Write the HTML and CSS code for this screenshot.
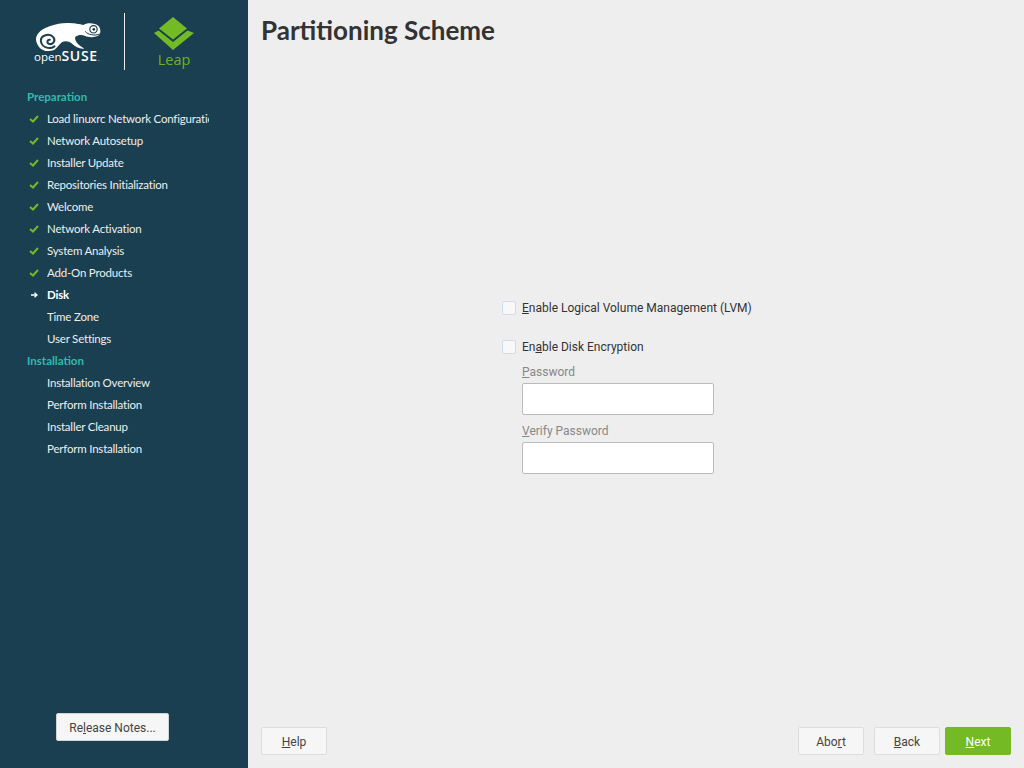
FILE: index.html
```html
<!DOCTYPE html>
<html>
<head>
<meta charset="utf-8">
<title>Partitioning Scheme</title>
<link rel="stylesheet" href="styles.css">
</head>
<body>
<div class="sidebar">
  <div class="logos">
    <div class="suse">
      <svg class="geeko" width="67" height="30" viewBox="105 66 200 90">
        <path fill="#fff" d="M108 112C114 92 134 80 175 71C200 66 235 70 250 75C258 68 285 68 295 78C302 86 302 98 298 104C290 112 268 114 255 108C245 104 235 104 226 110C222 116 228 126 236 134C242 139 248 142 252 146C240 148 226 142 214 130C208 124 196 122 186 126C178 132 172 142 162 150C146 156 126 154 116 140C110 132 106 122 108 112Z"/>
        <path fill="none" stroke="#1a3f50" stroke-width="6" stroke-linecap="round" d="M163 139C148 150 124 142 122 123C121 105 148 98 160 112C168 124 156 136 145 131C139 126 142 118 149 119"/>
        <circle cx="280" cy="88" r="11" fill="none" stroke="#1a3f50" stroke-width="3.5"/>
        <circle cx="281" cy="88" r="4" fill="#1a3f50"/>
        <path fill="none" stroke="#1a3f50" stroke-width="3" d="M255 94C264 105 284 108 299 102"/>
      </svg>
      <div class="suse-name">open<b>SUSE</b><span class="dot">.</span></div>
    </div>
    <div class="divider"></div>
    <div class="leap">
      <svg width="40" height="34" viewBox="0 0 40 34">
        <path fill="#73ba25" d="M19 0L33 11.5L19 22.5L5 11.5Z"/>
        <path fill="#73ba25" d="M0 16L4.5 13.5L19 25L33.5 13.5L40 16L19 33Z"/>
      </svg>
      <div class="leap-name">Leap</div>
    </div>
  </div>

  <div class="steps">
    <div class="step-head">Preparation</div>
    <div class="step"><span class="mark"><svg width="10" height="8" viewBox="0 0 10 8"><path class="tick" d="M1 4L4 6.5L9 1"/></svg></span><span class="step-name">Load linuxrc Network Configuration</span></div>
    <div class="step"><span class="mark"><svg width="10" height="8" viewBox="0 0 10 8"><path class="tick" d="M1 4L4 6.5L9 1"/></svg></span><span class="step-name">Network Autosetup</span></div>
    <div class="step"><span class="mark"><svg width="10" height="8" viewBox="0 0 10 8"><path class="tick" d="M1 4L4 6.5L9 1"/></svg></span><span class="step-name">Installer Update</span></div>
    <div class="step"><span class="mark"><svg width="10" height="8" viewBox="0 0 10 8"><path class="tick" d="M1 4L4 6.5L9 1"/></svg></span><span class="step-name">Repositories Initialization</span></div>
    <div class="step"><span class="mark"><svg width="10" height="8" viewBox="0 0 10 8"><path class="tick" d="M1 4L4 6.5L9 1"/></svg></span><span class="step-name">Welcome</span></div>
    <div class="step"><span class="mark"><svg width="10" height="8" viewBox="0 0 10 8"><path class="tick" d="M1 4L4 6.5L9 1"/></svg></span><span class="step-name">Network Activation</span></div>
    <div class="step"><span class="mark"><svg width="10" height="8" viewBox="0 0 10 8"><path class="tick" d="M1 4L4 6.5L9 1"/></svg></span><span class="step-name">System Analysis</span></div>
    <div class="step"><span class="mark"><svg width="10" height="8" viewBox="0 0 10 8"><path class="tick" d="M1 4L4 6.5L9 1"/></svg></span><span class="step-name">Add-On Products</span></div>
    <div class="step current"><span class="mark"><svg width="10" height="8" viewBox="0 0 10 8"><path class="arrow" d="M2 4H8M5.5 1.7L8 4L5.5 6.3"/></svg></span><span class="step-name">Disk</span></div>
    <div class="step"><span class="mark"></span><span class="step-name">Time Zone</span></div>
    <div class="step"><span class="mark"></span><span class="step-name">User Settings</span></div>
    <div class="step-head">Installation</div>
    <div class="step"><span class="mark"></span><span class="step-name">Installation Overview</span></div>
    <div class="step"><span class="mark"></span><span class="step-name">Perform Installation</span></div>
    <div class="step"><span class="mark"></span><span class="step-name">Installer Cleanup</span></div>
    <div class="step"><span class="mark"></span><span class="step-name">Perform Installation</span></div>
  </div>

  <div class="notes">
    <div class="btn notes-btn">Re<u>l</u>ease Notes...</div>
  </div>
</div>

<div class="main">
  <h1>Partitioning Scheme</h1>

  <div class="content">
    <div class="form">
      <div class="check lvm"><span class="box"></span><span><u>E</u>nable Logical Volume Management (LVM)</span></div>
      <div class="check"><span class="box"></span><span>En<u>a</u>ble Disk Encryption</span></div>
      <div class="field">
        <div class="field-label"><u>P</u>assword</div>
        <div class="input"></div>
      </div>
      <div class="field">
        <div class="field-label"><u>V</u>erify Password</div>
        <div class="input"></div>
      </div>
    </div>
  </div>

  <div class="buttons">
    <div class="btn">
      <u>H</u>elp
    </div>
    <div class="right-buttons">
      <div class="btn">Abo<u>r</u>t</div>
      <div class="btn back"><u>B</u>ack</div>
      <div class="btn next"><u>N</u>ext</div>
    </div>
  </div>
</div>
</body>
</html>
```

FILE: styles.css
```css
html, body {
  margin: 0;
  height: 100%;
}

body {
  display: flex;
  height: 768px;
  overflow: hidden;
  background-color: #eeeeee;
  font-family: Roboto, "Liberation Sans", sans-serif;
  font-size: 12px;
  color: #333;
}

/* Left panel */
.sidebar {
  width: 248px;
  flex-shrink: 0;
  display: flex;
  flex-direction: column;
  background-color: #1a3f50;
}

.logos {
  height: 86px;
  display: flex;
  box-sizing: border-box;
  padding-top: 13px;
}

.suse {
  width: 124px;
  padding-left: 35px;
  box-sizing: border-box;
  padding-top: 9px;
}

.geeko {
  display: block;
}

.suse-name {
  margin-top: -3px;
  margin-left: -1px;
  font-family: "Open Sans", sans-serif;
  font-size: 11.5px;
  line-height: 14px;
  color: #fff;
}

.suse-name b {
  font-size: 14px;
  font-weight: 600;
  letter-spacing: 0.7px;
}

.dot {
  font-size: 6px;
}

.divider {
  width: 1px;
  height: 57px;
  background-color: #e8eef0;
}

.leap {
  margin-left: 29px;
  padding-top: 4px;
  width: 40px;
  text-align: center;
}

.leap svg {
  display: block;
}

.leap-name {
  margin-top: -1px;
  font-family: "Open Sans", sans-serif;
  font-size: 14.5px;
  line-height: 20px;
  color: #6eb127;
}

.steps {
  font-family: Lato, sans-serif;
  font-size: 11.5px;
  color: #eeeeee;
}

.step-head {
  height: 22px;
  line-height: 21px;
  padding-left: 27px;
  font-weight: bold;
  color: #35b9ab;
}

.step {
  display: flex;
  align-items: center;
  height: 22px;
  padding-left: 29px;
  width: 180px;
  overflow: hidden;
  white-space: nowrap;
  letter-spacing: -0.2px;
}

.step-name {
  padding-bottom: 1px;
}

.step.current {
  font-weight: bold;
  color: #fff;
}

.mark {
  width: 18px;
  flex-shrink: 0;
  display: flex;
}

.tick {
  fill: none;
  stroke: #73ba25;
  stroke-width: 2;
}

.arrow {
  fill: none;
  stroke: #fff;
  stroke-width: 1.3;
}

.notes {
  margin-top: auto;
  padding: 0 0 27px 56px;
}

.btn {
  box-sizing: border-box;
  width: 66px;
  height: 28px;
  line-height: 28px;
  text-align: center;
  background-color: #f6f6f6;
  border: 1px solid #dddddd;
  border-radius: 2px;
  color: #444;
}

.notes-btn {
  width: 113px;
  border-color: #d0d4d6;
}

/* Main area */
.main {
  flex: 1;
  display: flex;
  flex-direction: column;
  padding: 0 13px 13px 13px;
}

h1 {
  margin: 0;
  padding-top: 12px;
  height: 36px;
  line-height: 36px;
  font-family: Lato, sans-serif;
  font-size: 26px;
  font-weight: bold;
  color: #333;
}

.content {
  flex: 1;
  display: flex;
  justify-content: center;
  align-items: center;
  padding-bottom: 2px;
}

.form {
  width: 268px;
}

.check {
  display: flex;
  align-items: center;
  height: 18px;
  gap: 6px;
}

.lvm {
  margin-bottom: 21px;
}

.box {
  box-sizing: border-box;
  width: 14px;
  height: 14px;
  background-color: #f8f8f8;
  border: 1px solid #d4dbe3;
  border-radius: 2px;
}

.field {
  margin-left: 20px;
  margin-top: 7px;
}

.field-label {
  height: 20px;
  line-height: 18px;
  color: #888;
}

.input {
  box-sizing: border-box;
  width: 192px;
  height: 32px;
  background-color: #fff;
  border: 1px solid #bbbbbb;
  border-radius: 2px;
}

.buttons {
  display: flex;
  justify-content: space-between;
}

.right-buttons {
  display: flex;
}

.back {
  margin: 0 5px 0 10px;
}

.next {
  background-color: #73ba25;
  border-color: #73ba25;
  color: #fff;
}
```
